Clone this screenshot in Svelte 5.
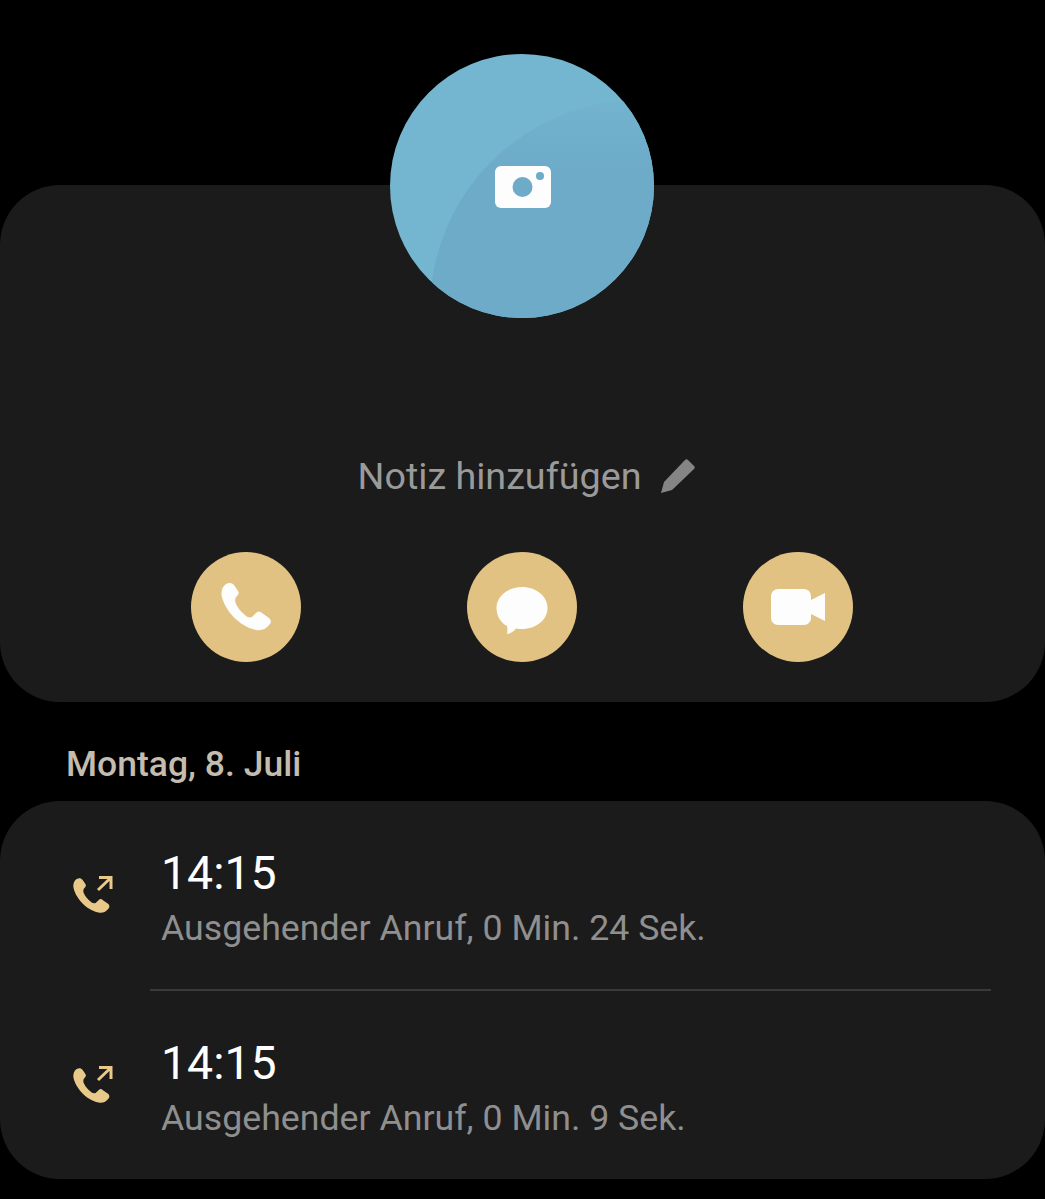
<script>
  const phone =
    'M5 2C9 0 11 1 13 3l4 6c1 2 1 3-1 5l-1.500 2c-.5 2-.5 4 .5 6 2 4 5 8 9 11 2 2 4 3 7 2l4-4c2-2 4-2 6 0l7 5c2 2 2.500 4 1 6-4 5-8 7-14 6C17 44 3 27 .5 13 0 8 2 4 5 2Z';

  const calls = [
    { time: '14:15', detail: 'Ausgehender Anruf, 0 Min. 24 Sek.' },
    { time: '14:15', detail: 'Ausgehender Anruf, 0 Min. 9 Sek.' }
  ];
</script>

<div class="page">
  <div class="avatar">
    <div class="avatar-shade"></div>
    <svg class="camera" width="56" height="42" viewBox="0 0 56 42">
      <rect width="56" height="42" rx="6" fill="#fdfdfd" />
      <circle cx="27.5" cy="21" r="10" fill="#6dabc8" />
      <circle cx="45" cy="10" r="4" fill="#6dabc8" />
    </svg>
  </div>

  <section class="card contact">
    <div class="note">
      <span>Notiz hinzufügen</span>
      <svg width="36" height="36" viewBox="0 0 36 36">
        <path d="M1 35 4 24 25 2c1-1 2-1 3 0l6 6c1 1 1 2 0 3L12 32Z" fill="#858585" />
      </svg>
    </div>

    <div class="actions">
      <button aria-label="Anrufen">
        <svg width="50" height="50" viewBox="0 0 50 50"><path d={phone} fill="#fdfdfd" /></svg>
      </button>
      <button aria-label="Nachricht">
        <svg class="bubble" width="52" height="48" viewBox="0 0 52 48">
          <path d="M26 0C40 0 51.500 9 51.500 21S40 42 26 42c-2 0-4 0-6-.5-2 2.500-5 5-9 5.500.5-2 .5-5 0-8C5 36 .5 29 .5 21 .5 9 12 0 26 0Z" fill="#fdfdfd" />
        </svg>
      </button>
      <button aria-label="Videoanruf">
        <svg width="56" height="36" viewBox="0 0 56 36">
          <rect x="1" width="40" height="36" rx="7" fill="#fdfdfd" />
          <path d="M39 12 55 4v28L39 24Z" fill="#fdfdfd" />
        </svg>
      </button>
    </div>
  </section>

  <h2 class="date">Montag, 8. Juli</h2>

  <section class="card log">
    {#each calls as call, i}
      {#if i > 0}<div class="divider"></div>{/if}
      <div class="row">
        <svg class="call-icon" width="42" height="40" viewBox="0 0 42 40">
          <g transform="translate(2 2.500) scale(.73)"><path d={phone} fill="#e8c98a" /></g>
          <path d="M27 15 39 3.500M28 2.500h12V14" fill="none" stroke="#e8c98a" stroke-width="3" />
        </svg>
        <div class="text">
          <div class="time">{call.time}</div>
          <div class="detail">{call.detail}</div>
        </div>
      </div>
    {/each}
  </section>
</div>

<style>
  :global(body) {
    background: #000;
    font-family: Roboto, "Liberation Sans", sans-serif;
  }

  .page {
    display: flex;
    flex-direction: column;
    height: 1199px;
    padding-top: 54px;
    box-sizing: border-box;
    overflow: hidden;
  }

  .avatar {
    position: relative;
    z-index: 1;
    align-self: center;
    width: 264px;
    height: 264px;
    margin-right: 1px;
    border-radius: 50%;
    background: #74b5cf;
    overflow: hidden;
    display: flex;
    align-items: center;
    justify-content: center;
  }

  .avatar-shade {
    position: absolute;
    left: 40px;
    top: 46px;
    width: 420px;
    height: 420px;
    border-radius: 50%;
    background: linear-gradient(180deg, #73b3ce 0, #6dabc8 70px);
  }

  .camera {
    position: relative;
    top: 1px;
    left: 1px;
  }

  .card {
    background: #1b1b1b;
    border-radius: 60px;
  }

  .contact {
    margin-top: -133px;
    padding: 269px 0 40px;
  }

  .note {
    display: flex;
    align-items: center;
    justify-content: center;
    gap: 19px;
    height: 44px;
    padding-left: 9px;
    color: #9a9a9a;
    font-size: 37.7px;
  }

  .actions {
    display: flex;
    justify-content: center;
    gap: 166px;
    margin: 54px 1px 0 0;
  }

  .actions button {
    width: 110px;
    height: 110px;
    padding: 0;
    border: none;
    border-radius: 50%;
    background: #e2c282;
    display: flex;
    align-items: center;
    justify-content: center;
  }

  .bubble {
    margin-top: 7px;
  }

  .date {
    margin: 42px 0 16px 66px;
    height: 41px;
    line-height: 41px;
    color: #c4bcae;
    font-size: 35.5px;
    font-weight: 500;
  }

  .row {
    display: flex;
    align-items: center;
    height: 188px;
    padding-left: 71px;
  }

  .divider {
    height: 2px;
    margin: 0 54px 0 150px;
    background: #3a3a3a;
  }

  .call-icon {
    margin-right: 48px;
  }

  .text {
    padding-top: 3px;
  }

  .time {
    color: #fff;
    font-size: 46.4px;
    line-height: 56px;
  }

  .detail {
    margin-top: 6px;
    color: #8f8f8f;
    font-size: 35.7px;
    line-height: 42px;
  }
</style>
